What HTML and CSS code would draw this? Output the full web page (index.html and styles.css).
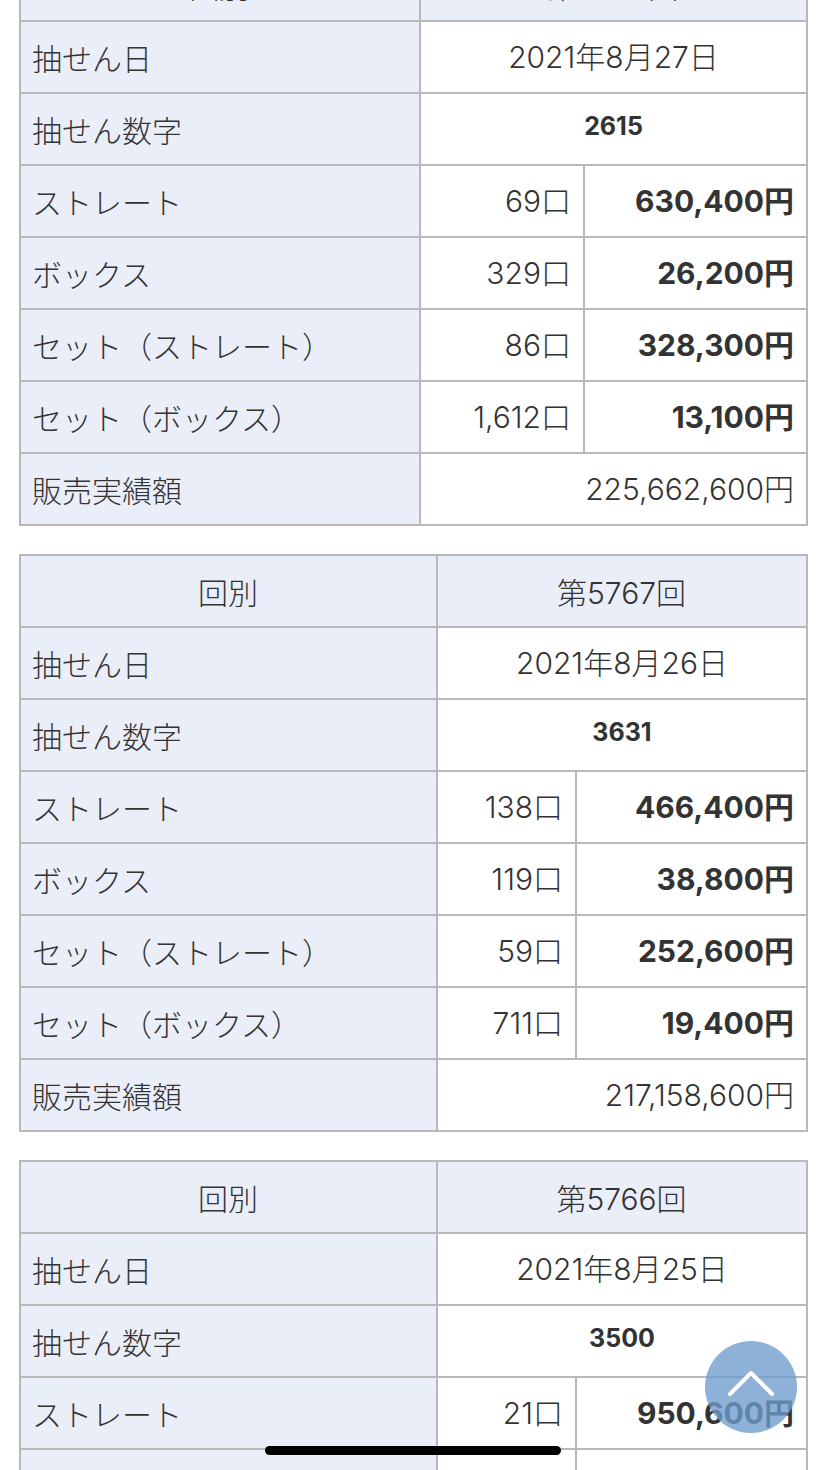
FILE: index.html
```html
<!DOCTYPE html>
<html lang="ja">
<head>
<meta charset="utf-8">
<title>ナンバーズ4 当せん番号</title>
<link rel="stylesheet" href="styles.css">
</head>
<body>
<main class="page">
  <table class="result result--first">
    <colgroup><col class="c1a"><col class="c2a"><col class="c3a"></colgroup>
    <tr><th class="label center">回別</th><th class="label center" colspan="2">第5768回</th></tr>
    <tr><th class="label">抽せん日</th><td class="center" colspan="2">2021年8月27日</td></tr>
    <tr><th class="label">抽せん数字</th><td class="center num" colspan="2"><b>2615</b></td></tr>
    <tr><th class="label">ストレート</th><td class="right">69口</td><td class="right amount">630,400円</td></tr>
    <tr><th class="label">ボックス</th><td class="right">329口</td><td class="right amount">26,200円</td></tr>
    <tr><th class="label">セット（ストレート）</th><td class="right">86口</td><td class="right amount">328,300円</td></tr>
    <tr><th class="label">セット（ボックス）</th><td class="right">1,612口</td><td class="right amount">13,100円</td></tr>
    <tr><th class="label">販売実績額</th><td class="right" colspan="2">225,662,600円</td></tr>
  </table>

  <table class="result">
    <colgroup><col class="c1b"><col class="c2b"><col class="c3b"></colgroup>
    <tr><th class="label center">回別</th><th class="label center" colspan="2">第5767回</th></tr>
    <tr><th class="label">抽せん日</th><td class="center" colspan="2">2021年8月26日</td></tr>
    <tr><th class="label">抽せん数字</th><td class="center num" colspan="2"><b>3631</b></td></tr>
    <tr><th class="label">ストレート</th><td class="right">138口</td><td class="right amount">466,400円</td></tr>
    <tr><th class="label">ボックス</th><td class="right">119口</td><td class="right amount">38,800円</td></tr>
    <tr><th class="label">セット（ストレート）</th><td class="right">59口</td><td class="right amount">252,600円</td></tr>
    <tr><th class="label">セット（ボックス）</th><td class="right">711口</td><td class="right amount">19,400円</td></tr>
    <tr><th class="label">販売実績額</th><td class="right" colspan="2">217,158,600円</td></tr>
  </table>

  <table class="result">
    <colgroup><col class="c1b"><col class="c2b"><col class="c3b"></colgroup>
    <tr><th class="label center">回別</th><th class="label center" colspan="2">第5766回</th></tr>
    <tr><th class="label">抽せん日</th><td class="center" colspan="2">2021年8月25日</td></tr>
    <tr><th class="label">抽せん数字</th><td class="center num" colspan="2"><b>3500</b></td></tr>
    <tr><th class="label">ストレート</th><td class="right">21口</td><td class="right amount">950,600円</td></tr>
    <tr><th class="label">ボックス</th><td class="right">0口</td><td class="right amount">0円</td></tr>
  </table>
</main>

<a class="to-top" href="#" aria-label="ページの先頭へ">
  <svg width="92" height="92" viewBox="0 0 92 92" aria-hidden="true">
    <polyline points="25,53 46,32 67,53" fill="none" stroke="#ffffff" stroke-width="4" stroke-linecap="round" stroke-linejoin="round"/>
  </svg>
</a>
<div class="home-indicator"></div>
</body>
</html>
```

FILE: styles.css
```css
html, body {
  margin: 0;
  padding: 0;
  background: #ffffff;
}

body {
  font-family: "Inter", "Noto Sans CJK JP", "Noto Sans", sans-serif;
  color: #333333;
  font-size: 30px;
  overflow: hidden;
}

.page {
  padding: 0 19px;
  display: flex;
  flex-direction: column;
  gap: 28px;
}

.result {
  width: 787px;
  border-collapse: collapse;
  table-layout: fixed;
  border: 2px solid #b8b8b8;
}

.result--first {
  margin-top: -52px;
}

.c1a { width: 400px; }
.c2a { width: 164px; }
.c3a { width: 223px; }

.c1b { width: 417px; }
.c2b { width: 139px; }
.c3b { width: 231px; }

.result th,
.result td {
  border: 2px solid #b8b8b8;
  height: 70px;
  padding: 0 12px;
  box-sizing: border-box;
  font-weight: 300;
  line-height: 1;
  white-space: nowrap;
  vertical-align: middle;
}

.result .label {
  padding-left: 11px;
  padding-top: 3px;
}

.result tr {
  height: 72px;
}

.label {
  background: #eaeef8;
  text-align: left;
}

.center {
  text-align: center;
}

.right {
  text-align: right;
}

.result .num {
  font-size: 25px;
  padding-bottom: 5px;
}

.num b {
  font-weight: 700;
}

.result .amount {
  font-weight: 700;
}

.to-top {
  position: fixed;
  left: 705px;
  top: 1341px;
  width: 92px;
  height: 92px;
  border-radius: 50%;
  background: rgba(110, 155, 205, 0.78);
  display: flex;
  align-items: center;
  justify-content: center;
}

.to-top svg {
  display: block;
}

.home-indicator {
  position: fixed;
  left: 265px;
  top: 1446px;
  width: 296px;
  height: 9px;
  border-radius: 5px;
  background: #000000;
}
```
